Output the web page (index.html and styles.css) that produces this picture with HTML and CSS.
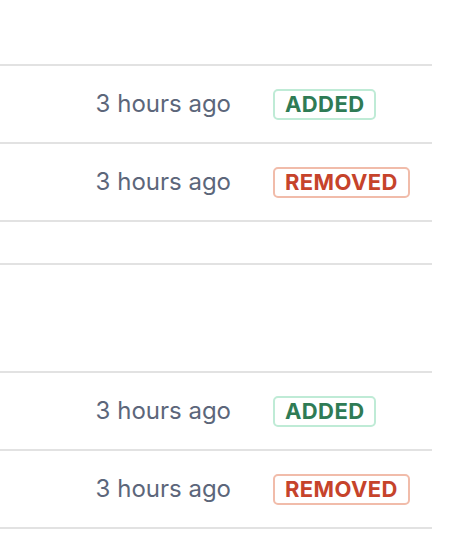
FILE: index.html
```html
<!DOCTYPE html>
<html>
<head>
<meta charset="utf-8">
<link rel="stylesheet" href="styles.css">
</head>
<body>
<div class="page">
  <div class="spacer-top"></div>
  <section class="group">
    <div class="row">
      <span class="time">3 hours ago</span>
      <span class="cell"><span class="badge added">ADDED</span></span>
    </div>
    <div class="row">
      <span class="time">3 hours ago</span>
      <span class="cell"><span class="badge removed">REMOVED</span></span>
    </div>
  </section>
  <section class="group second">
    <div class="row header-row"></div>
    <div class="row">
      <span class="time">3 hours ago</span>
      <span class="cell"><span class="badge added">ADDED</span></span>
    </div>
    <div class="row">
      <span class="time">3 hours ago</span>
      <span class="cell"><span class="badge removed">REMOVED</span></span>
    </div>
  </section>
</div>
</body>
</html>
```

FILE: styles.css
```css
html, body {
  margin: 0;
  padding: 0;
  background: #ffffff;
}

.page {
  width: 432px;
  font-family: "Inter", "Liberation Sans", sans-serif;
}

.spacer-top {
  height: 64px;
}

.group {
  border-top: 2px solid #e2e2e2;
}

.group.second {
  margin-top: 41px;
}

.row {
  height: 76px;
  border-bottom: 2px solid #e2e2e2;
  display: grid;
  grid-template-columns: 1fr 159px;
  align-items: center;
}

.header-row {
  height: 106px;
}

.time {
  text-align: right;
  padding-right: 42px;
  font-size: 24px;
  color: #5c667a;
  line-height: 1;
}

.badge {
  display: inline-block;
  box-sizing: border-box;
  height: 31px;
  line-height: 27px;
  padding: 0 10px;
  border: 2px solid;
  border-radius: 5px;
  font-size: 22px;
  font-weight: 700;
  letter-spacing: 0.4px;
}

.badge.added {
  color: #2f7b55;
  border-color: #bfebd6;
}

.badge.removed {
  color: #c6432b;
  border-color: #f1bcaa;
}
```
